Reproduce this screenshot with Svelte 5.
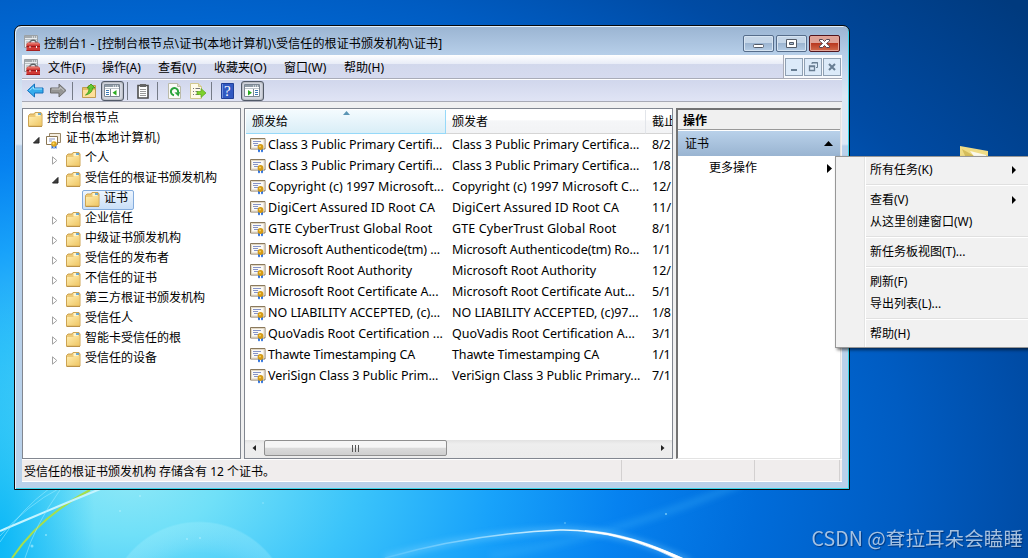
<script>
  const menus = [
    { label: '文件(F)', width: 54 },
    { label: '操作(A)', width: 56 },
    { label: '查看(V)', width: 56 },
    { label: '收藏夹(O)', width: 70 },
    { label: '窗口(W)', width: 60 },
    { label: '帮助(H)', width: 56 }
  ]

  const tree = [
    { label: '控制台根节点', depth: 0 },
    { label: '证书(本地计算机)', depth: 1, state: 'open', icon: 'certs' },
    { label: '个人', depth: 2, state: 'closed' },
    { label: '受信任的根证书颁发机构', depth: 2, state: 'open' },
    { label: '证书', depth: 3, selected: true },
    { label: '企业信任', depth: 2, state: 'closed' },
    { label: '中级证书颁发机构', depth: 2, state: 'closed' },
    { label: '受信任的发布者', depth: 2, state: 'closed' },
    { label: '不信任的证书', depth: 2, state: 'closed' },
    { label: '第三方根证书颁发机构', depth: 2, state: 'closed' },
    { label: '受信任人', depth: 2, state: 'closed' },
    { label: '智能卡受信任的根', depth: 2, state: 'closed' },
    { label: '受信任的设备', depth: 2, state: 'closed' }
  ]

  // issued to, issued by, expiry, tracking
  const rows = [
    ['Class 3 Public Primary Certifi...', 'Class 3 Public Primary Certifica...', '8/2', -0.09],
    ['Class 3 Public Primary Certifi...', 'Class 3 Public Primary Certifica...', '1/8', -0.09],
    ['Copyright (c) 1997 Microsoft...', 'Copyright (c) 1997 Microsoft C...', '12/', 0.03],
    ['DigiCert Assured ID Root CA', 'DigiCert Assured ID Root CA', '11/', 0.08],
    ['GTE CyberTrust Global Root', 'GTE CyberTrust Global Root', '8/1', 0.1],
    ['Microsoft Authenticode(tm) ...', 'Microsoft Authenticode(tm) Ro...', '1/1', -0.08],
    ['Microsoft Root Authority', 'Microsoft Root Authority', '12/', 0],
    ['Microsoft Root Certificate A...', 'Microsoft Root Certificate Aut...', '5/1', 0],
    ['NO LIABILITY ACCEPTED, (c)...', 'NO LIABILITY ACCEPTED, (c)97...', '1/8', 0],
    ['QuoVadis Root Certification ...', 'QuoVadis Root Certification A...', '3/1', 0],
    ['Thawte Timestamping CA', 'Thawte Timestamping CA', '1/1', -0.13],
    ['VeriSign Class 3 Public Prim...', 'VeriSign Class 3 Public Primary...', '7/1', -0.04]
  ]

  const contextMenu = [
    { label: '所有任务(K)', sub: true },
    null,
    { label: '查看(V)', sub: true },
    { label: '从这里创建窗口(W)' },
    null,
    { label: '新任务板视图(T)...' },
    null,
    { label: '刷新(F)' },
    { label: '导出列表(L)...' },
    null,
    { label: '帮助(H)' }
  ]
</script>

{#snippet mmc()}
  <svg width="17" height="17" viewBox="0 0 17 17">
    <path d="M.5.5h13v12H.5z" fill="#e9edef" stroke="#9ba1a5" />
    <path d="M1 1h12v2H1z" fill="#a4aaae" />
    <path d="M8 2h1m1 0h1m1 0h1" stroke="#fff" />
    <path d="M1 4.500h12" stroke="#b9bfc3" />
    <path d="M2 6h3v6H2z" fill="#c5cbce" />
    <path d="M6 8V6.500q3.500-2.500 6 0V8" fill="none" stroke="#5d6062" stroke-width="1.300" />
    <path d="M2.500 9 4 7.500h10.500L16 9v7H2.500z" fill="#d03a36" />
    <path d="M4 8h10.500l1 1.500h-13z" fill="#e67468" />
    <path d="M2.500 11.500H16" stroke="#96191b" />
    <path d="M2.500 15.500H16" stroke="#a51f20" />
    <path d="M5.500 11h1v2h-1zm6.500 0h1v2h-1z" fill="#f1f1ef" />
  </svg>
{/snippet}

{#snippet folder()}
  <svg width="15" height="15" viewBox="0 0 15 15">
    <path d="M.500 3.500 2 2h4l1-1.500h6L14 2v12H.500z" fill="#edc976" stroke="#cda452" />
    <path d="M7.500 1h5v3h-5z" fill="#fff4c9" />
    <path d="M10 2h3" stroke="#3e94d5" stroke-width="1.500" />
    <path d="M1 5h6l1-1h5.500v9.500H1z" fill="url(#folder-face)" />
    <path d="M.500 14.500H14" stroke="#bd9448" />
  </svg>
{/snippet}

{#snippet cert()}
  <svg width="17" height="15" viewBox="0 0 17 15">
    <path d="M.5.5h14.500v10.500H.5z" fill="#fbfaf6" stroke="#8a795c" />
    <path d="M1.500 1.500h12.500v8.500H1.500z" fill="none" stroke="#e2d8c5" />
    <path d="M3 3.500h8M3 5.500h5M4 7.500h5" stroke="#8694c7" />
    <path d="M8 10h2v4.500L9 13.500l-1 1zm3 0h2v4.500l-1-1-1 1z" fill="#3274dc" />
    <circle cx="10.500" cy="9" r="2.900" fill="#d49a16" />
    <circle cx="10" cy="8.500" r="1" fill="#f8d760" />
  </svg>
{/snippet}

{#snippet certs()}
  <svg width="16" height="16" viewBox="0 0 16 16">
    <path d="M3.500.5h11v9h-11z" fill="#f5eee0" stroke="#9a8868" />
    <path d="M.5 3.500h11v8H.5z" fill="#fff" stroke="#8b7653" />
    <path d="M3 6h6M3 8h3" stroke="#8995c0" />
    <path d="M5.500 11h2v5l-1-1-1 1zm3 0h2v5l-1-1-1 1z" fill="#2d6bd3" />
    <circle cx="8" cy="11" r="2.800" fill="#dda51f" />
    <circle cx="7.500" cy="10.500" r="1" fill="#fde173" />
  </svg>
{/snippet}

{#snippet pane(flip)}
  <svg width="17" height="15" viewBox="0 0 17 15">
    <path d="M.5 1.500h15v12H.5z" fill="#fff" stroke="#7d8792" />
    <path d="M1 2h14v2H1z" fill="#8f9ba7" />
    <path d="M9 3h1m1 0h1m1 0h1" stroke="#fff" />
    <path d="M1 5.500h14" stroke="#bdc4ca" />
    {#if flip}
      <path d="M9.500 6v7.500" stroke="#7d8792" />
      <path d="M11 7.500h3M11 9.500h3M11 11.500h3" stroke="#3b78b4" />
      <path d="m4 7 4 2.800L4 12.500z" fill="#2cab22" />
    {:else}
      <path d="M6.500 6v7.500" stroke="#7d8792" />
      <path d="M2 7.500h3M2 9.500h3M2 11.500h3" stroke="#3b78b4" />
      <path d="M12.500 7 8.500 9.800l4 2.700z" fill="#2cab22" />
    {/if}
  </svg>
{/snippet}

<div class="desktop">
  <svg class="wallpaper" width="1028" height="558" viewBox="0 0 1028 558">
    <defs>
      <radialGradient id="sky" gradientUnits="userSpaceOnUse" cx="0" cy="0" r="1" gradientTransform="translate(130 475) scale(1140 744)">
        <stop offset="0" stop-color="#8ee8f7" />
        <stop offset=".08" stop-color="#70e0f8" />
        <stop offset=".2" stop-color="#3bc4fa" />
        <stop offset=".32" stop-color="#18a2fa" />
        <stop offset=".43" stop-color="#0682f0" />
        <stop offset=".55" stop-color="#006cda" />
        <stop offset=".68" stop-color="#005cc2" />
        <stop offset=".8" stop-color="#004ba4" />
        <stop offset="1" stop-color="#003a7e" />
      </radialGradient>
      <radialGradient id="edge">
        <stop offset="0" stop-color="#00b4f6" stop-opacity=".85" />
        <stop offset="1" stop-color="#00b4f6" stop-opacity="0" />
      </radialGradient>
      <linearGradient id="folder-face" x1="0" x2="1" y1="0" y2="1">
        <stop stop-color="#ffedb0" />
        <stop offset="1" stop-color="#efc765" />
      </linearGradient>
      <radialGradient id="bubble">
        <stop offset=".65" stop-color="#fff" stop-opacity="0" />
        <stop offset=".98" stop-color="#b6f4ff" stop-opacity=".25" />
        <stop offset="1" stop-color="#b6f4ff" stop-opacity="0" />
      </radialGradient>
      <linearGradient id="arc" x1="0" x2="1" y1="0" y2="0">
        <stop stop-color="#74cfff" stop-opacity=".4" />
        <stop offset=".55" stop-color="#d9f3ff" />
        <stop offset="1" stop-color="#fff" />
      </linearGradient>
      <filter id="soft" x="-20%" y="-50%" width="140%" height="200%"><feGaussianBlur stdDeviation="3" /></filter>
    </defs>
    <rect width="1028" height="558" fill="url(#sky)" />
    <ellipse cx="0" cy="540" rx="95" ry="260" fill="url(#edge)" />
    <circle cx="199" cy="614" r="93" fill="url(#bubble)" />
    <path d="M490 556Q610 538 740 484" stroke="#43b5fb" stroke-width="7" opacity=".3" fill="none" filter="url(#soft)" />
    <path d="M12 558C31 530 56 508 90 490" stroke="#a5df4c" stroke-width="2" fill="none" />
    <path d="M0 531C31 518 70 501 103 488" stroke="#c5f4ff" stroke-width="2" fill="none" />
    <path d="M0 542Q20 510 50 488M0 536Q27 505 60 488M25 558Q35 525 60 490" stroke="#9cecff" stroke-width=".7" opacity=".8" fill="none" />
    <path d="M385 558Q470 534 560 530 620 529 690 562" stroke="#82d5ff" stroke-width="5" opacity=".5" fill="none" filter="url(#soft)" />
    <path d="M385 558Q470 534 560 530 620 529 690 562" stroke="url(#arc)" stroke-width="1.600" fill="none" />
    <path d="M585 530.500Q632 533 690 562h-7Q632 536 585 531.500z" fill="#fff" stroke="#fff" stroke-width=".6" />
    <g fill="#b9f3ff" opacity=".6">
      <circle cx="32" cy="546" r="1.500" /><circle cx="46" cy="535" r="1" /><circle cx="140" cy="496" r="1" />
      <circle cx="187" cy="539" r="1" /><circle cx="200" cy="538" r="1" /><circle cx="120" cy="511" r="1" />
      <circle cx="666" cy="514" r="1" /><circle cx="565" cy="523" r=".8" /><circle cx="263" cy="503" r=".8" />
    </g>
    <path d="m960 146 28 5v8h-28z" fill="#efdc86" />
    <path d="m962 149 16 9h-12z" fill="#d5bd5c" />
    <path d="m970 151 16 4v4h-10z" fill="#faf8ec" />
  </svg>

  <div class="window">
    <div class="titlebar">
      {@render mmc()}
      <span class="title">控制台1 - [控制台根节点\证书(本地计算机)\受信任的根证书颁发机构\证书]</span>
      <div class="controls">
        <button aria-label="Minimize"><svg width="31" height="17"><rect x="10.500" y="9.500" width="10" height="3" rx="1" fill="#fff" stroke="#535b68" /></svg></button>
        <button aria-label="Maximize"><svg width="31" height="17"><path d="M10.500 4.500h10v8h-10z" fill="#fff" stroke="#535b68" /><path d="M13.500 7.500h4v2h-4z" fill="#a7bbd2" stroke="#535b68" /></svg></button>
        <button class="close" aria-label="Close"><svg width="31" height="17"><path d="m10.500 4.500h3l2 2 2-2h3v1.500l-3 2.500 3 2.500v1.500h-3l-2-2-2 2h-3v-1.500l3-2.500-3-2.500z" fill="#fff" stroke="#554550" /></svg></button>
      </div>
    </div>

    <div class="client">
      <div class="menubar">
        {@render mmc()}
        <div class="menus">
          {#each menus as menu}
            <span style:width="{menu.width}px">{menu.label}</span>
          {/each}
        </div>
        <div class="mdi">
          <button aria-label="Minimize child"><svg width="16" height="16"><path d="M5 11h6" stroke="#697e93" stroke-width="2" /></svg></button>
          <button aria-label="Restore child"><svg width="16" height="16"><path d="M7 5V3.500h5.500v5H11M7 4h6" fill="none" stroke="#697e93" /><path d="M4.500 7h5v4.500h-5zM4 7.500h6" fill="none" stroke="#697e93" stroke-width="1.300" /></svg></button>
          <button aria-label="Close child"><svg width="16" height="16"><path d="m5 5 6 6m0-6-6 6" stroke="#697e93" stroke-width="2" /></svg></button>
        </div>
      </div>

      <div class="toolbar">
        <svg width="17" height="15" viewBox="0 0 17 15"><path d="m.5 7.500 7-6.500v4H16v5H7.500v4z" fill="#36acec" stroke="#1670bd" /><path d="m2.500 7.500 4-3.500v2h8.500" fill="none" stroke="#9ae3ff" /></svg>
        <svg class="forward" width="17" height="15" viewBox="0 0 17 15"><path d="m16 7.500-7-6.500v4H.5v5H9v4z" fill="#959595" stroke="#6d6d6d" /><path d="M2 6h8V4l4 3.500" fill="none" stroke="#c7c7c7" /></svg>
        <i class="divider"></i>
        <svg width="15" height="16" viewBox="0 0 15 16"><path d="M.5 4.500h5l1-2h7v12H.5z" fill="#e5bd67" stroke="#c09c52" /><path d="M1 7h12v7H1z" fill="#ffe09a" /><path d="m9 1 4 4h-2.500c0 4-3 6-7 7 3-2 3.500-4 3.500-7H5z" fill="#66c833" stroke="#369716" stroke-width=".8" /></svg>
        <span class="toggle left">{@render pane(false)}</span>
        <i class="divider"></i>
        <svg class="paste" width="14" height="16" viewBox="0 0 14 16"><path d="M2 2.500h10v12.500H2z" fill="#fff" stroke="#4e4e4e" stroke-width="1.600" /><path d="M4 1h6v3H4z" fill="#666" /><path d="M4 6.500h6m-6 2h6m-6 2h6m-6 2h6" stroke="#999" /></svg>
        <i class="divider second"></i>
        <svg width="14" height="16" viewBox="0 0 14 16"><path d="M.5.5h9l3 3v12H.5z" fill="#fbfbf7" stroke="#bbbba9" /><path d="M9.500.5v3h3" fill="#dcdcd1" stroke="#bbbba9" /><path d="M6 12.200A3.600 3.600 0 1 1 10 9.500" fill="none" stroke="#29a33a" stroke-width="2" /><path d="m6.500 9.500 5.500-.5-1.500 4.500z" fill="#29a33a" /></svg>
        <svg class="export" width="17" height="16" viewBox="0 0 17 16"><path d="M.5.5h8l3 3v12H.5z" fill="#fffbe9" stroke="#d1c88f" /><path d="M8.500.5v3h3" fill="#e5dcb1" stroke="#d1c88f" /><path d="M3 5.500h1m1.500 0H10M3 8.500h1m1.500 0H8m-5 3h1m1.500 0H9" stroke="#777" /><path d="M7 8.500h4v-3l5 4.500-5 4.500v-3H7z" fill="#7ed02d" stroke="#59a51d" stroke-width=".7" /></svg>
        <i class="divider third"></i>
        <svg class="help" width="13" height="16" viewBox="0 0 13 16"><path d="M.5.5h12v15H.5z" fill="#3159c2" stroke="#203f98" /><path d="M1.500 1v14" stroke="#7191df" /><text x="3" y="13" fill="#fff" font-size="15" font-family="Liberation Serif, serif">?</text></svg>
        <span class="toggle">{@render pane(true)}</span>
      </div>

      <div class="panels">
        <div class="tree">
          {#each tree as node}
            <div class="node depth{node.depth}">
              <span class="expander" class:open={node.state === 'open'}>
                {#if node.state === 'open'}
                  <svg width="7" height="7"><path d="M6 .5V6H.5z" fill="#404040" stroke="#222" /></svg>
                {:else if node.state === 'closed'}
                  <svg width="6" height="9"><path d="M.5.8v7.400L4.800 4.500z" fill="#fff" stroke="#a2a2a2" /></svg>
                {/if}
              </span>
              <span class="item" class:selected={node.selected}>
                <span class="icon" class:certs={node.icon}>
                  {#if node.icon}{@render certs()}{:else}{@render folder()}{/if}
                </span>
                <span class="label" class:spaced={node.icon}>{node.label}</span>
              </span>
            </div>
          {/each}
        </div>

        <div class="list">
          <div class="header">
            <span class="sorted">颁发给<svg width="7" height="4"><path d="m0 4 3.500-4L7 4z" fill="#5a95b4" /></svg></span>
            <span>颁发者</span>
            <span>截止</span>
          </div>
          <div class="rows">
            {#each rows as row}
              <div class="row" style:letter-spacing="{row[3]}px">
                {@render cert()}
                <span class="c1">{row[0]}</span>
                <span class="c2">{row[1]}</span>
                <span class="c3">{row[2]}</span>
              </div>
            {/each}
          </div>
          <div class="scrollbar">
            <svg width="18" height="17"><path d="M10 5v6L6.500 8z" fill="#222" /></svg>
            <div class="thumb"><i></i><i></i><i></i></div>
            <svg class="end" width="17" height="17"><path d="M7 5v6l3.500-3z" fill="#222" /></svg>
          </div>
        </div>

        <div class="actions">
          <div class="actions-title">操作</div>
          <div class="group">证书<svg width="9" height="5"><path d="m0 5 4.500-5L9 5z" /></svg></div>
          <div class="more">更多操作<svg width="5" height="9"><path d="m0 0 5 4.500L0 9z" /></svg></div>
        </div>
      </div>

      <div class="status">
        <span class="message">受信任的根证书颁发机构 存储含有 12 个证书。</span>
        <span class="part"></span>
        <span class="part last"></span>
      </div>
    </div>
  </div>

  <div class="context">
    {#each contextMenu as item}
      {#if item}
        <div class="entry">
          {item.label}
          {#if item.sub}<svg width="4" height="8"><path d="m0 0 4 4-4 4z" /></svg>{/if}
        </div>
      {:else}
        <div class="sep"></div>
      {/if}
    {/each}
  </div>

  <div class="watermark">CSDN @耷拉耳朵会瞌睡</div>
</div>

<style>
  .desktop {
    position: relative;
    width: 1028px;
    height: 558px;
    overflow: hidden;
    background: #0662c2;
    font: 12px/20px "Noto Sans", "Noto Sans CJK SC", sans-serif;
    color: #000;
    white-space: nowrap;
  }

  .desktop * {
    box-sizing: border-box;
  }

  svg {
    display: block;
    flex: none;
  }

  button {
    display: block;
    padding: 0;
    margin: 0;
  }

  .wallpaper {
    position: absolute;
  }

  .window {
    position: absolute;
    left: 14px;
    top: 25px;
    width: 836px;
    height: 465px;
    padding: 0 7px 7px;
    border: 1px solid #08090b;
    border-radius: 7px 7px 0 0;
    background: linear-gradient(#9ab4d2, #b7cfe9 29px, #dce8f5 70px, #dce8f5 118px, #b9d1ea 120px);
    box-shadow: inset 1px 1px #e3f1fc, inset -1px -1px #37d5ec;
  }

  .titlebar {
    height: 29px;
    display: flex;
    padding: 9px 2px 0;
  }

  .title {
    margin: -1px 0 0 3px;
    line-height: 20px;
    letter-spacing: .12px;
  }

  .controls {
    display: flex;
    gap: 2px;
    margin: 0 0 0 auto;
  }

  .controls button {
    width: 31px;
    height: 17px;
    border: 1px solid #566d8b;
    border-radius: 2px;
    background: linear-gradient(#c5d6e8 50%, #9cb5d1 50%, #b5cde6);
    box-shadow: inset 0 0 0 1px #d6e4f2;
  }

  .controls svg {
    margin: -1px;
  }

  .controls .close {
    border-color: #51151e;
    background: linear-gradient(#dea297 48%, #b93920 50%, #d26c4d);
    box-shadow: inset 0 0 0 1px #e5a598;
  }

  .client {
    height: 427px;
    width: 820px;
    background: #f0f0f0;
  }

  .menubar {
    display: flex;
    height: 25px;
    padding-left: 2px;
    border-bottom: 1px solid #fff;
    background: linear-gradient(#fff, #e8ecf7 9px, #d2d8ec 9px, #d6dbef 23px, #a9acb8 23px);
  }

  .menubar > :global(svg) {
    margin-top: 4px;
  }

  .menus {
    display: flex;
    padding: 3px 0 0 7px;
  }

  .mdi {
    display: flex;
    gap: 1px;
    margin-left: auto;
    padding: 3px 1px 0;
    height: 23px;
    background: #f7f9fd;
    border-left: 1px solid #a9acb8;
  }

  .mdi button {
    width: 18px;
    height: 18px;
    border: 1px solid #8fa0b3;
    background: #dceaf9;
  }

  .toolbar {
    height: 22px;
    display: flex;
    align-items: center;
    padding-left: 5px;
    background: linear-gradient(#d1d7ec, #e0e4f5);
    border-bottom: 1px solid #a8aab5;
  }

  .forward {
    margin-left: 6px;
  }

  .divider {
    width: 1px;
    height: 18px;
    margin: 0 9px 0 5px;
    background: #757b87;
  }

  .toolbar .toggle {
    display: flex;
    justify-content: center;
    align-items: center;
    width: 23px;
    height: 20px;
    border: 1px solid #515967;
    border-radius: 3px;
    background: #d5d9e3;
    box-shadow: inset 0 0 2px #777;
  }

  .toggle.left {
    margin: 0 -2px 0 4px;
  }

  .paste {
    margin-left: -1px;
  }

  .divider.second {
    margin: 0 10px 0 7px;
  }

  .export {
    margin-left: 8px;
  }

  .divider.third {
    margin: 0 9px 0 4px;
  }

  .help {
    margin-right: 7px;
  }

  .panels {
    display: flex;
    height: 351px;
    margin-top: 6px;
  }

  .tree {
    width: 219px;
    height: 351px;
    border: 1px solid #828790;
    background: #fff;
  }

  .node {
    display: flex;
    height: 20px;
  }

  .expander {
    flex: none;
    width: 12px;
    padding-top: 7px;
  }

  .expander.open {
    padding-top: 8px;
  }

  .depth0 .expander { margin-left: -9px; }
  .depth1 .expander { margin-left: 10px; }
  .depth2 .expander { margin-left: 29px; }
  .depth3 .expander { margin-left: 48px; }

  .item {
    display: flex;
    height: 20px;
    padding-left: 1px;
    font-family: "Noto Sans CJK SC", sans-serif;
  }

  .icon {
    width: 20px;
    padding: 3px 0 0 1px;
  }

  .icon.certs {
    padding: 4px 0 0;
  }

  .label {
    line-height: 16px;
  }

  .spaced {
    letter-spacing: .3px;
  }

  .selected {
    width: 52px;
    margin: 1px 0 -1px -1px;
    padding-left: 1px;
    border: 1px solid #84acdd;
    border-radius: 2px;
    background: linear-gradient(#eef5fd, #c9dff8);
  }

  .selected .icon {
    padding-top: 1px;
  }

  .selected .label {
    line-height: 12px;
  }

  .list {
    display: flex;
    flex-direction: column;
    width: 429px;
    height: 351px;
    margin-left: 3px;
    border: 1px solid #828790;
    background: #fff;
    overflow: hidden;
  }

  .header {
    display: flex;
    height: 25px;
    padding: 1px 0 0 1px;
  }

  .header span {
    position: relative;
    flex: none;
    width: 200px;
    padding: 2px 6px 0;
    border-right: 1px solid #e2e5ea;
    border-bottom: 1px solid #d5d5d5;
    background: linear-gradient(#fff 45%, #f5f6f8 46%, #f2f3f5);
  }

  .header .sorted {
    border-color: #96d9f9;
    background: linear-gradient(#f4fbfe, #e8f5fb 45%, #d9eef7);
  }

  .sorted svg {
    position: absolute;
    left: 97px;
    top: 1px;
  }

  .rows {
    flex: 1;
  }

  .row {
    display: flex;
    height: 21px;
    padding: 4px 0 0 5px;
  }

  .row span {
    flex: none;
    line-height: 13px;
    font-size: 12.500px;
  }

  .c1 {
    width: 185px;
    padding-left: 1px;
  }

  .c2 {
    width: 200px;
  }

  .scrollbar {
    display: flex;
    height: 18px;
    padding: 0 1px 1px;
    background: linear-gradient(#e2e2e2, #eee 4px, #ececec);
  }

  .thumb {
    display: flex;
    justify-content: center;
    gap: 2px;
    width: 183px;
    height: 16px;
    padding-top: 4px;
    border: 1px solid #8f8f8f;
    border-radius: 2px;
    background: linear-gradient(#f5f5f5 45%, #dadada 50%, #cfcfcf);
  }

  .thumb i {
    width: 1px;
    height: 7px;
    background: #555;
  }

  .end {
    margin-left: auto;
  }

  .actions {
    width: 165px;
    height: 351px;
    margin-left: 3px;
    border: 2px solid #737373;
    border-right: 1px solid #e1e1e1;
    border-bottom: 1px solid #e3e3e3;
    background: #fff;
  }

  .actions-title {
    height: 20px;
    padding-left: 5px;
    border-bottom: 1px solid #999;
    background: #f0f0f0;
    line-height: 21px;
    font-weight: 700;
  }

  .group {
    display: flex;
    justify-content: space-between;
    align-items: center;
    height: 25px;
    margin-top: 1px;
    padding: 0 7px;
    background: linear-gradient(#b9d1ea, #99b4d1);
  }

  .more {
    display: flex;
    justify-content: space-between;
    align-items: center;
    height: 24px;
    padding: 0 8px 0 31px;
  }

  .status {
    display: flex;
    height: 23px;
    border-top: 1px solid #fff;
    border-bottom: 1px solid #fff;
    background: #f0eded;
    line-height: 23px;
  }

  .message {
    width: 600px;
    padding-left: 2px;
    border-right: 1px solid #d3d0d0;
  }

  .part {
    width: 133px;
    border-right: 1px solid #d3d0d0;
  }

  .last {
    width: 85px;
  }

  .context {
    position: absolute;
    left: 835px;
    top: 156px;
    width: 196px;
    height: 192px;
    padding: 2px;
    border: 1px solid #979797;
    background: linear-gradient(90deg, transparent 28px, #e2e3e3 28px, #e2e3e3 29px, #fff 29px, #fff 30px, transparent 30px), #f1f1f1;
    box-shadow: 2px 2px 3px rgba(0, 0, 0, .55);
  }

  .entry {
    display: flex;
    justify-content: space-between;
    align-items: center;
    height: 22px;
    padding: 0 12px 0 32px;
  }

  .sep {
    height: 8px;
    margin-left: 28px;
    background: linear-gradient(transparent 3px, #e0e0e0 3px, #e0e0e0 4px, #fff 4px, #fff 5px, transparent 5px);
  }

  .watermark {
    position: absolute;
    right: 5px;
    top: 525px;
    font: 19.600px/26px "Noto Sans CJK SC", sans-serif;
    color: #c1d3e8;
    opacity: .85;
    text-shadow: 1px 1px 1px rgba(0, 30, 80, .7);
  }
</style>
